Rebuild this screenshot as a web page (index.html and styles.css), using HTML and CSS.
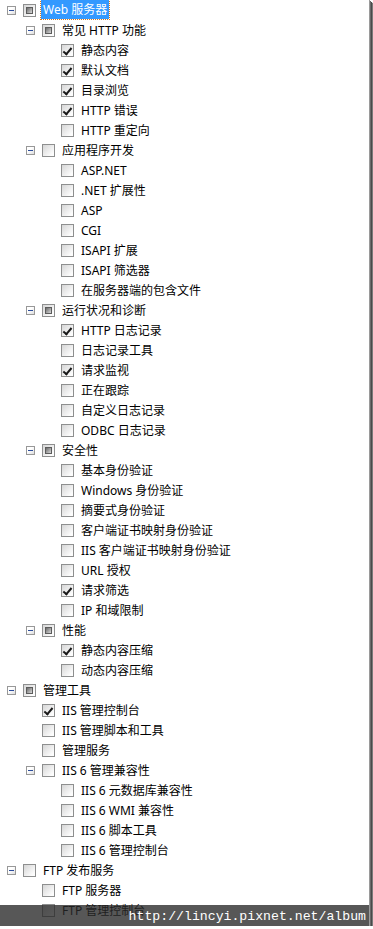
FILE: index.html
```html
<!DOCTYPE html>
<html>
    <head>
        <title>角色服务</title>
        <link rel="stylesheet" href="styles.css">
    </head>
    <body>
        <div class="frame">
            <!-- the role services tree; every li holds one row and maybe a sub list -->
            <ul class="tree">
                <li>
                    <div class="row"><span class="exp"></span><span class="cb part"></span><span class="label sel">Web 服务器</span></div>
                    <ul>
                        <li>
                            <div class="row"><span class="exp"></span><span class="cb part"></span><span class="label">常见 HTTP 功能</span></div>
                            <ul>
                                <li><div class="row"><span class="leaf"></span><span class="cb on"></span><span class="label">静态内容</span></div></li>
                                <li><div class="row"><span class="leaf"></span><span class="cb on"></span><span class="label">默认文档</span></div></li>
                                <li><div class="row"><span class="leaf"></span><span class="cb on"></span><span class="label">目录浏览</span></div></li>
                                <li><div class="row"><span class="leaf"></span><span class="cb on"></span><span class="label">HTTP 错误</span></div></li>
                                <li><div class="row"><span class="leaf"></span><span class="cb"></span><span class="label">HTTP 重定向</span></div></li>
                            </ul>
                        </li>
                        <li>
                            <div class="row"><span class="exp"></span><span class="cb"></span><span class="label">应用程序开发</span></div>
                            <ul>
                                <li><div class="row"><span class="leaf"></span><span class="cb"></span><span class="label">ASP.NET</span></div></li>
                                <li><div class="row"><span class="leaf"></span><span class="cb"></span><span class="label">.NET 扩展性</span></div></li>
                                <li><div class="row"><span class="leaf"></span><span class="cb"></span><span class="label">ASP</span></div></li>
                                <li><div class="row"><span class="leaf"></span><span class="cb"></span><span class="label">CGI</span></div></li>
                                <li><div class="row"><span class="leaf"></span><span class="cb"></span><span class="label">ISAPI 扩展</span></div></li>
                                <li><div class="row"><span class="leaf"></span><span class="cb"></span><span class="label">ISAPI 筛选器</span></div></li>
                                <li><div class="row"><span class="leaf"></span><span class="cb"></span><span class="label">在服务器端的包含文件</span></div></li>
                            </ul>
                        </li>
                        <li>
                            <div class="row"><span class="exp"></span><span class="cb part"></span><span class="label">运行状况和诊断</span></div>
                            <ul>
                                <li><div class="row"><span class="leaf"></span><span class="cb on"></span><span class="label">HTTP 日志记录</span></div></li>
                                <li><div class="row"><span class="leaf"></span><span class="cb"></span><span class="label">日志记录工具</span></div></li>
                                <li><div class="row"><span class="leaf"></span><span class="cb on"></span><span class="label">请求监视</span></div></li>
                                <li><div class="row"><span class="leaf"></span><span class="cb"></span><span class="label">正在跟踪</span></div></li>
                                <li><div class="row"><span class="leaf"></span><span class="cb"></span><span class="label">自定义日志记录</span></div></li>
                                <li><div class="row"><span class="leaf"></span><span class="cb"></span><span class="label">ODBC 日志记录</span></div></li>
                            </ul>
                        </li>
                        <li>
                            <div class="row"><span class="exp"></span><span class="cb part"></span><span class="label">安全性</span></div>
                            <ul>
                                <li><div class="row"><span class="leaf"></span><span class="cb"></span><span class="label">基本身份验证</span></div></li>
                                <li><div class="row"><span class="leaf"></span><span class="cb"></span><span class="label">Windows 身份验证</span></div></li>
                                <li><div class="row"><span class="leaf"></span><span class="cb"></span><span class="label">摘要式身份验证</span></div></li>
                                <li><div class="row"><span class="leaf"></span><span class="cb"></span><span class="label">客户端证书映射身份验证</span></div></li>
                                <li><div class="row"><span class="leaf"></span><span class="cb"></span><span class="label">IIS 客户端证书映射身份验证</span></div></li>
                                <li><div class="row"><span class="leaf"></span><span class="cb"></span><span class="label">URL 授权</span></div></li>
                                <li><div class="row"><span class="leaf"></span><span class="cb on"></span><span class="label">请求筛选</span></div></li>
                                <li><div class="row"><span class="leaf"></span><span class="cb"></span><span class="label">IP 和域限制</span></div></li>
                            </ul>
                        </li>
                        <li>
                            <div class="row"><span class="exp"></span><span class="cb part"></span><span class="label">性能</span></div>
                            <ul>
                                <li><div class="row"><span class="leaf"></span><span class="cb on"></span><span class="label">静态内容压缩</span></div></li>
                                <li><div class="row"><span class="leaf"></span><span class="cb"></span><span class="label">动态内容压缩</span></div></li>
                            </ul>
                        </li>
                    </ul>
                </li>
                <li>
                    <div class="row"><span class="exp"></span><span class="cb part"></span><span class="label">管理工具</span></div>
                    <ul>
                        <li><div class="row"><span class="leaf"></span><span class="cb on"></span><span class="label">IIS 管理控制台</span></div></li>
                        <li><div class="row"><span class="leaf"></span><span class="cb"></span><span class="label">IIS 管理脚本和工具</span></div></li>
                        <li><div class="row"><span class="leaf"></span><span class="cb"></span><span class="label">管理服务</span></div></li>
                        <li>
                            <div class="row"><span class="exp"></span><span class="cb"></span><span class="label">IIS 6 管理兼容性</span></div>
                            <ul>
                                <li><div class="row"><span class="leaf"></span><span class="cb"></span><span class="label">IIS 6 元数据库兼容性</span></div></li>
                                <li><div class="row"><span class="leaf"></span><span class="cb"></span><span class="label">IIS 6 WMI 兼容性</span></div></li>
                                <li><div class="row"><span class="leaf"></span><span class="cb"></span><span class="label">IIS 6 脚本工具</span></div></li>
                                <li><div class="row"><span class="leaf"></span><span class="cb"></span><span class="label">IIS 6 管理控制台</span></div></li>
                            </ul>
                        </li>
                    </ul>
                </li>
                <li>
                    <div class="row"><span class="exp"></span><span class="cb"></span><span class="label">FTP 发布服务</span></div>
                    <ul>
                        <li><div class="row"><span class="leaf"></span><span class="cb"></span><span class="label">FTP 服务器</span></div></li>
                        <li><div class="row"><span class="leaf"></span><span class="cb"></span><span class="label">FTP 管理控制台</span></div></li>
                    </ul>
                </li>
            </ul>

            <!-- album watermark lying over the bottom rows -->
            <div class="watermark">http://lincyi.pixnet.net/album</div>
        </div>
    </body>
</html>
```

FILE: styles.css
```css
html, body {
    margin: 0;
    background: #fff;
}

.frame {
    position: relative;
    width: 369px;
    height: 926px;
    overflow: hidden;
    background: #fff;
    border-right: 1px solid #9a9a9a;
    box-shadow: 1px 1px 0 #6a6a6a, 2px 2px 0 #4a4a4a, 3px 3px 1px #7a7a7a;
    font-family: "Noto Sans", "Noto Sans CJK SC", sans-serif;
    font-size: 12px;
    color: #000;
}

/*-- the tree --*/
.tree, .tree ul {
    list-style: none;
    margin: 0;
    padding: 0;
}

.tree ul {
    padding-left: 19px;
}

.row {
    display: flex;
    align-items: center;
    height: 20px;
    padding-left: 7px;
}

/* plus / minus box in front of a branch */
.exp, .leaf {
    flex: none;
    width: 9px;
    height: 9px;
    margin-right: 7px;
    box-sizing: border-box;
}

.exp {
    position: relative;
    border: 1px solid #989898;
    background: linear-gradient(135deg, #fff 40%, #dcdcdc);
}

.exp::after {/*the minus*/
    content: "";
    position: absolute;
    left: 1px;
    top: 3px;
    width: 5px;
    height: 1px;
    background: #2b4c9a;
}

/* check boxes, Windows 7 look */
.cb {
    flex: none;
    position: relative;
    width: 13px;
    height: 13px;
    box-sizing: border-box;
    border: 1px solid #8e8f8f;
    background: linear-gradient(135deg, #d6d6d6, #fdfdfd 85%);
    margin-right: 5px;
}

.cb.part::after {/*square for a partly checked branch*/
    content: "";
    position: absolute;
    left: 2px;
    top: 2px;
    width: 7px;
    height: 7px;
    box-sizing: border-box;
    border: 1px solid #5c5c5c;
    background: linear-gradient(135deg, #6a6a6a, #d8d8d8);
}

.cb.on::after {/*tick*/
    content: "";
    position: absolute;
    left: 3px;
    top: 1px;
    width: 3px;
    height: 7px;
    border: solid #1a1a1a;
    border-width: 0 2px 2px 0;
    transform: rotate(40deg);
}

.label {
    padding: 0 2px;
    line-height: 19px;
    white-space: nowrap;
}

.label.sel {
    margin-top: -1px;
    background: #3399ff;
    color: #fff;
    outline: 1px dotted #d8781c;
}

/*-- watermark --*/
.watermark {
    position: absolute;
    left: 0;
    right: 0;
    top: 905px;
    height: 21px;
    padding-right: 3px;
    background: rgba(40, 40, 40, 0.78);
    color: #fff;
    font-family: "Liberation Mono", monospace;
    font-size: 13.2px;
    line-height: 23px;
    text-align: right;
}
```
